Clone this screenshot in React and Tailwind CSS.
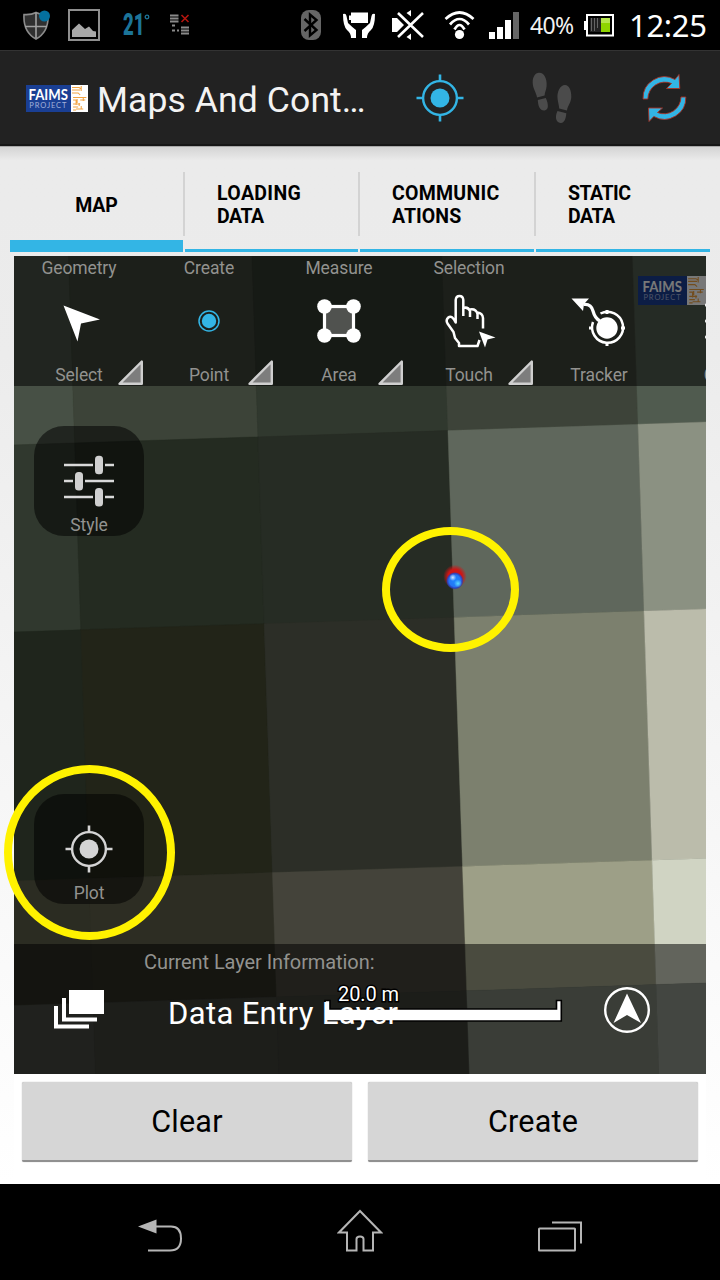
import React from "react";

const tileRows = [
  { top: [250, 250], fills: ["#475045", "#3c4338", "#30382e", "#3d4339", "#505b4f"] },
  { top: [445, 422], fills: ["#30382e", "#242b21", "#262c24", "#5f675c", "#8b9182"] },
  { top: [632, 609], fills: ["#1f251c", "#222418", "#2c2e27", "#7c806e", "#bbbcab"] },
  { top: [881, 858.5], fills: ["#2b2c22", "#2d2d23", "#44433a", "#9d9f87", "#d0d4c3"] },
  { top: [1005.5, 983], fills: ["#444640", "#3e4039", "#3d3e37", "#7b8376", "#8f968b"] },
];
const columnEdges = [
  [-10, -10],
  [68.5, 95.5],
  [252, 279],
  [442, 469.5],
  [632.5, 659],
  [740, 740],
];

function cross(row, col) {
  const [t0, t1] = row;
  const [c0, c1] = col;
  let x = c0;
  let y = t0;
  for (let i = 0; i < 4; i++) {
    y = t0 + ((x - 14) / 692) * (t1 - t0);
    x = c0 + ((y - 256) / 818) * (c1 - c0);
  }
  return `${x.toFixed(1)},${y.toFixed(1)}`;
}

function MapTiles() {
  const bottoms = [...tileRows.slice(1).map((r) => r.top), [1090, 1090]];
  return (
    <svg className="absolute inset-0" width="692" height="818" viewBox="14 256 692 818">
      <rect x="14" y="256" width="692" height="818" fill="#2a2f27" />
      {tileRows.map((row, r) =>
        row.fills.map((fill, c) => (
          <polygon
            key={`${r}-${c}`}
            fill={fill}
            stroke={fill}
            strokeWidth="0.4"
            points={[
              cross(row.top, columnEdges[c]),
              cross(row.top, columnEdges[c + 1]),
              cross(bottoms[r], columnEdges[c + 1]),
              cross(bottoms[r], columnEdges[c]),
            ].join(" ")}
          />
        ))
      )}
    </svg>
  );
}

function Logo({ className }) {
  return (
    <div className={`flex overflow-hidden ${className}`}>
      <div className="flex w-[72%] flex-col items-center justify-center bg-[#1a3f94] text-white">
        <span className="scale-x-[0.85] font-['Lato',sans-serif] text-[15.5px] leading-[15px] font-bold">FAIMS</span>
        <span className="font-['Lato',sans-serif] text-[7.5px] leading-[8px] tracking-[0.9px] text-[#a3b2da]">PROJECT</span>
      </div>
      <svg className="w-[28%] flex-1 bg-white" viewBox="0 0 17 27" preserveAspectRatio="none" fill="none" stroke="#f2a341" strokeWidth="1">
        <path d="M1 2.500H8L10 4M1 5H9M1 8H7L9 10M10 1V6M15 12.500H2M6 14V18M2 15H5V20M9 15H14M2 19H9M8 18V21M12 13V16M2 22H7M5 24H12M2 25H5M10 21V24" />
      </svg>
    </div>
  );
}

function Crosshair({ color, className }) {
  return (
    <svg className={className} width="48" height="48" viewBox="0 0 48 48" fill="none" stroke={color}>
      <circle cx="24" cy="24" r="16.900" strokeWidth="2.400" />
      <path d="M24 .5V7.500M24 40.500V47.500M.5 24H7.500M40.500 24H47.500" strokeWidth="2.600" />
      <circle cx="24" cy="24" r="9.500" fill={color} stroke="none" />
    </svg>
  );
}

function StatusBar() {
  return (
    <header className="flex h-[50px] shrink-0 items-center bg-black pl-[23px]">
      <svg width="28" height="32" viewBox="0 0 28 32" className="shrink-0">
        <path d="M1 5.500Q8 6 13 3.500Q18 6 25 5.500Q26 23 13 30Q0 23 1 5.500Z" fill="#303030" stroke="#8c8c8c" strokeWidth="1.600" />
        <path d="M13 3.500V29M2 17.500H24" stroke="#a0a0a0" strokeWidth="1.600" />
        <circle cx="21.500" cy="7" r="5.500" fill="#04709f" />
      </svg>
      <svg width="32" height="32" viewBox="0 0 32 32" className="ml-[17px] shrink-0">
        <rect x="1" y="1" width="30" height="30" fill="none" stroke="#8f8f8f" strokeWidth="2" />
        <path d="M4 28V21L11 14.500L17 20L21 17.500L25 22L28 22.500V28Z" fill="#a8a8a8" />
      </svg>
      <div className="ml-[22.500px] flex w-[28.500px] shrink-0 items-start text-[#1c7498]">
        <span className="origin-left scale-x-[0.600] font-['Roboto',sans-serif] text-[31px] leading-[36px] font-black">21</span>
        <svg width="6" height="6" viewBox="0 0 6 6" className="mt-[7px] -ml-[14px] shrink-0">
          <circle cx="3" cy="3" r="1.800" fill="none" stroke="#1c7498" strokeWidth="1.300" />
        </svg>
      </div>
      <svg width="20" height="22" viewBox="0 0 20 22" className="ml-[19px] -mt-[2px] shrink-0">
        <path d="M0 2.500H8.500M0 5.500H8.500M0 8.500H8.500M2 12.500H5M2 17.500H5M7 17.500H9M11 14.500H19M11 17.500H19M11 20.500H19" stroke="#8a8a8a" strokeWidth="2" />
        <path d="M11.500 2L18.500 9M18.500 2L11.500 9" stroke="#b3150f" strokeWidth="1.600" />
      </svg>
      <svg width="20" height="30" viewBox="0 0 20 30" className="ml-[111px] shrink-0">
        <rect width="20" height="30" rx="8" fill="#666" />
        <path d="M3.500 9L15.500 20L9 25.500V4.500L15.500 10L3.500 21" fill="none" stroke="#000" strokeWidth="2.400" />
      </svg>
      <svg width="33" height="28" viewBox="0 0 33 28" className="ml-[22px] shrink-0" fill="#fff">
        <path d="M6 4.500H8V1.500H25V12H8V9H6ZM0 3Q3 2 3.500 5L5 12Q9 16 13 19V27H8Q8 22 4 19Q0 15 0 3ZM32 3Q29 2 28.500 5L27 12Q23 16 19 19V27H24Q24 22 28 19Q32 15 32 3Z" />
      </svg>
      <svg width="32" height="30" viewBox="0 0 32 30" className="ml-[16px] shrink-0" fill="none" stroke="#fff">
        <path d="M0 8H5L12 15L5 22H0ZM14.500 3L19 0V6.500ZM14.500 27L19 23.500V30Z" fill="#fff" stroke="none" />
        <path d="M6 3L31 27M31 3L6 27" stroke="#000" strokeWidth="5" />
        <path d="M6 3L31 27M31 3L6 27" strokeWidth="2.600" />
      </svg>
      <svg width="32" height="29" viewBox="0 0 32 29" className="ml-[20px] shrink-0" fill="none" stroke="#fff" strokeWidth="2.700">
        <path d="M1.500 8Q15.500 -5 29.500 8M6 13.500Q15.500 2.500 25 13.500M10.500 18.500Q15.500 9.500 20.500 18.500" />
        <circle cx="15.500" cy="23.500" r="4.600" fill="#fff" stroke="none" />
      </svg>
      <svg width="30" height="27" viewBox="0 0 30 27" className="ml-[13px] shrink-0" fill="#fff">
        <path d="M0 20H6V27H0ZM8 15H14V27H8ZM16 8H22V27H16Z" />
        <path d="M24 0H30V27H24Z" fill="#666" />
      </svg>
      <span className="ml-[11px] w-[46px] shrink-0 font-['Noto_Sans',sans-serif] text-[23px] leading-[50px] tracking-[-0.600px] text-[#f2f2f2]">40%</span>
      <svg width="30" height="23" viewBox="0 0 30 23" className="ml-[8px] shrink-0">
        <path d="M0 7H2V16H0Z" fill="#fff" />
        <rect x="3" y="1" width="26" height="20.500" fill="#000" stroke="#fff" strokeWidth="2" />
        <path d="M6 4H17V18H6Z" fill="#222" />
        <path d="M7.500 4V17M10.500 4V17M13.500 4V14" stroke="#666" />
        <path d="M17 4H26V18H17Z" fill="#8fd400" />
        <path d="M17 4H26V9H17Z" fill="#b5e54b" />
      </svg>
      <span className="ml-[15px] font-['Noto_Sans',sans-serif] text-[31px] leading-[50px] tracking-[-0.300px] text-white">12:25</span>
    </header>
  );
}

function ActionBar() {
  return (
    <div className="flex h-24 shrink-0 items-center border-t border-b-2 border-t-[#333] border-b-[#161616] bg-[#222] pl-[26px]">
      <Logo className="mt-[2px] h-[27px] w-[62px] shrink-0" />
      <h1 className="mt-[5px] ml-[9px] w-[300px] text-[35.500px] leading-[44px] tracking-[0.100px] whitespace-nowrap text-[#f3f3f3]">Maps And Cont…</h1>
      <Crosshair color="#33b5e5" className="ml-[18.500px] shrink-0" />
      <svg width="42" height="52" viewBox="0 0 42 52" className="ml-[68.500px] shrink-0" fill="#4b4b4b">
        <path d="M7 .8C12 .5 15.300 7 14.600 14C14.300 18 12.800 20 12.600 23.500L5 25.500C4.500 21 1 17 .7 11C.5 5 3 1 7 .8ZM5.800 28L13.800 26C17 33 16.500 38 12.500 38.500C8 38.800 6 34 5.800 28Z" />
        <path d="M33 13C28 13 25 20 25.500 26C26 31 27 33 27.200 36.500L35 38.500C35.500 34 39 31 39.300 25C39.500 18 37 13 33 13ZM25.500 39L34.300 41.300C34 47 32 51.500 28.500 51C24 50.500 22.500 45 25.500 39Z" />
      </svg>
      <svg width="46" height="50" viewBox="0 0 46 50" className="ml-[68px] shrink-0">
        <g stroke="#a83226" strokeWidth="0.900" fill="#33b5e5" strokeLinejoin="round">
          <path d="M1 26A21.500 21.500 0 0 1 33 6.500L37 1.500L37.800 15.500H24.500L29.500 10.500A17 17 0 0 0 5.800 26Z" />
          <path d="M43.800 24A21.500 21.500 0 0 1 11.800 43.500L7 48.500L6.500 35H20.500L15.500 39.500A17 17 0 0 0 39 24Z" />
        </g>
      </svg>
    </div>
  );
}

const tabs = [
  { lines: [["MAP", "tracking-[-0.100px]"]], active: true },
  { lines: [["LOADING", "tracking-[0.350px]"], ["DATA", "tracking-[-0.500px]"]] },
  { lines: [["COMMUNIC", "tracking-[0.250px]"], ["ATIONS", "tracking-[0.050px]"]] },
  { lines: [["STATIC", "tracking-[-0.500px]"], ["DATA", "tracking-[-0.500px]"]] },
];

function Tabs() {
  return (
    <nav className="mx-[10px] grid h-[92px] shrink-0 grid-cols-[173px_2px_173px_2px_174px_2px_174px]">
      {tabs.map((tab, i) => (
        <React.Fragment key={i}>
          {i > 0 && <div className="mt-3 h-16 bg-[#d3d3d3]" />}
          <div
            className={
              tab.active
                ? "flex flex-col items-center border-b-[12px] border-[#33b5e5] pt-[34px]"
                : "flex flex-col items-start border-b-[3px] border-[#33b5e5] pt-[22px] pl-8"
            }
          >
            {tab.lines.map(([line, tracking]) => (
              <span key={line} className={`text-[19.500px] leading-[23px] font-bold text-black ${tracking}`}>
                {line}
              </span>
            ))}
          </div>
        </React.Fragment>
      ))}
    </nav>
  );
}

const SelectIcon = () => (
  <svg width="60" height="60" viewBox="0 0 60 60">
    <path d="M14.500 14.500L51 28.500L32 32.500L28.500 50.500Z" fill="#fff" />
  </svg>
);
const PointIcon = () => (
  <svg width="60" height="60" viewBox="0 0 60 60">
    <circle cx="30" cy="30" r="10" fill="none" stroke="#33b5e5" strokeWidth="1.500" />
    <circle cx="30" cy="30" r="7.200" fill="#33b5e5" />
  </svg>
);
const AreaIcon = () => (
  <svg width="60" height="60" viewBox="0 0 60 60">
    <rect x="15.500" y="15.500" width="29" height="29" fill="#50524f" stroke="#fff" strokeWidth="3.200" />
    <g fill="#fff">
      <circle cx="15.500" cy="15.500" r="7.300" />
      <circle cx="44.500" cy="15.500" r="7.300" />
      <circle cx="15.500" cy="44.500" r="7.300" />
      <circle cx="44.500" cy="44.500" r="7.300" />
    </g>
  </svg>
);
const TouchIcon = () => (
  <svg width="60" height="60" viewBox="0 0 60 60">
    <path
      d="M44 37.500V27Q43.500 22 38.500 21.500V28M38.500 23Q37 17.500 31 18.500V26M31 20Q29 15.500 24.300 17V25M24.300 23V9Q24 5 20.500 5Q17 5 16.700 9V31.500Q13 23.500 9.300 26.500Q6.500 29 8.500 32.500L14.500 41L16 47L20 52V55H38.500L40.500 49"
      fill="none" stroke="#fff" strokeWidth="2.500" strokeLinejoin="round"
    />
    <path d="M40 40.500L56.500 46.500L48.500 48.500L46 56.500Z" fill="#fff" />
  </svg>
);
const TrackerIcon = () => (
  <svg width="60" height="60" viewBox="0 0 60 60" fill="none" stroke="#fff">
    <path d="M2.500 7.500H20L15 13L14 20Z" fill="#fff" stroke="none" />
    <path d="M14.500 13.500Q22 12.500 24 20T31 30" strokeWidth="3.200" />
    <path d="M31.500 22.500A15.500 15.500 0 1 1 24 31" strokeWidth="2.500" />
    <path d="M38 19V23M38 51V55M20 37H24M52 37H56" strokeWidth="3" />
    <circle cx="38" cy="37" r="10.700" fill="#fff" stroke="none" />
  </svg>
);
const MoreIcon = () => (
  <svg width="48" height="60" viewBox="0 0 48 60" fill="#fff">
    <circle cx="2" cy="14" r="2" />
    <circle cx="2" cy="30" r="2" />
    <circle cx="2" cy="46" r="2" />
  </svg>
);

const tools = [
  { group: "Geometry", label: "Select", Icon: SelectIcon, menu: true },
  { group: "Create", label: "Point", Icon: PointIcon, menu: true },
  { group: "Measure", label: "Area", Icon: AreaIcon, menu: true },
  { group: "Selection", label: "Touch", Icon: TouchIcon, menu: true },
  { group: "\u00a0", label: "Tracker", Icon: TrackerIcon },
  { group: "\u00a0", label: "Config", Icon: MoreIcon },
];

function Toolbar() {
  return (
    <div className="absolute inset-x-0 top-0 flex h-[130px] overflow-hidden bg-[#000000]/53 text-[17.500px] leading-[20px] tracking-[-0.100px] text-[#92928f]">
      {tools.map(({ group, label, Icon, menu }) => (
        <div key={label} className="relative flex w-[130px] shrink-0 flex-col items-center pt-[2px]">
          <span>{group}</span>
          <div className="mt-[13px]"><Icon /></div>
          <span className="mt-[14px]">{label}</span>
          {menu && (
            <svg className="absolute top-[103px] left-[103px]" width="28" height="27" viewBox="0 0 28 27">
              <path d="M24.800 2.500V24.800H2.500Z" fill="#7d7d7d" stroke="#cfcfcf" strokeWidth="2.400" strokeLinejoin="round" />
            </svg>
          )}
        </div>
      ))}
    </div>
  );
}

function MapButton({ label, className, children }) {
  return (
    <div className={`absolute left-5 flex h-[110px] w-[110px] flex-col items-center rounded-[30px] bg-[#000000]/53 ${className}`}>
      <div className="mt-[31px] h-[48px]">{children}</div>
      <span className="mt-[10px] text-[17.500px] leading-[20px] tracking-[-0.100px] text-[#92928f]">{label}</span>
    </div>
  );
}

function MapView() {
  return (
    <section className="relative mx-[14px] mt-1 h-[818px] shrink-0 overflow-hidden">
      <MapTiles />
      <svg className="absolute top-[307px] left-[427px]" width="28" height="32" viewBox="0 0 28 32">
        <defs>
          <radialGradient id="halo">
            <stop offset="0.600" stopColor="#cf1515" />
            <stop offset="1" stopColor="#cf1515" stopOpacity="0" />
          </radialGradient>
          <radialGradient id="ball">
            <stop offset="0" stopColor="#1f86ff" />
            <stop offset="0.650" stopColor="#2376f5" />
            <stop offset="0.850" stopColor="#2b3fc0" stopOpacity="0.900" />
            <stop offset="1" stopColor="#2b3fa0" stopOpacity="0" />
          </radialGradient>
          <radialGradient id="shine">
            <stop offset="0" stopColor="#fff" stopOpacity="0.800" />
            <stop offset="1" stopColor="#fff" stopOpacity="0" />
          </radialGradient>
          <radialGradient id="glow">
            <stop offset="0" stopColor="#5fdcff" />
            <stop offset="1" stopColor="#5fdcff" stopOpacity="0" />
          </radialGradient>
        </defs>
        <circle cx="14" cy="13.500" r="11.800" fill="url(#halo)" />
        <circle cx="13.800" cy="17.800" r="8.800" fill="url(#ball)" />
        <circle cx="17" cy="20.500" r="4" fill="url(#glow)" />
        <circle cx="11.800" cy="14.500" r="3.500" fill="url(#shine)" />
      </svg>
      <Logo className="absolute top-[20px] left-[624px] h-[29px] w-[68px]" />
      <Toolbar />
      <MapButton label="Style" className="top-[170px]">
        <svg width="50" height="52" viewBox="0 -2 50 52" className="-mt-[2px]" fill="none" stroke="#d9d9d9">
          <path d="M0 8H29M41 8H50M0 24H9M21 24H50M0 40H29M41 40H50" strokeWidth="2.600" />
          <g fill="#d0d0d0" stroke="none">
            <rect x="31" y="-1.200" width="8" height="18.500" rx="3.500" />
            <rect x="11" y="15" width="8" height="18.500" rx="3.500" />
            <rect x="31" y="31" width="8" height="18.500" rx="3.500" />
          </g>
        </svg>
      </MapButton>
      <MapButton label="Plot" className="top-[538px]">
        <Crosshair color="#d4d4d4" />
      </MapButton>
      <div className="absolute inset-x-0 bottom-0 h-[130px] bg-[#000000]/53">
        <svg className="absolute top-[55px] left-[309px]" width="242" height="25" viewBox="0 0 242 25">
          <path d="M2 1.500H7V10H233.500V1.500H238.300V22H2Z" fill="#fff" stroke="#000" strokeWidth="1.600" />
        </svg>
        <span className="absolute top-[38px] left-[324px] text-[20px] leading-[24px] tracking-[-0.100px] text-white [-webkit-text-stroke:3px_black] [paint-order:stroke_fill]">
          20.0 m
        </span>
        <div className="relative flex h-full items-start">
          <svg className="mt-[45px] ml-[40px] shrink-0" width="51" height="40" viewBox="0 0 51 40" fill="#fff">
            <path d="M15 1H50V25H15ZM8 9H12V28.500H43V32.500H8ZM0 17H4V35.500H35V39.500H0Z" />
          </svg>
          <div className="ml-[39px] flex w-[400px] flex-col">
            <span className="mt-[6px] text-[20px] leading-[24px] tracking-[-0.080px] text-[#92928f]">Current Layer Information:</span>
            <span className="mt-[22px] ml-[24px] text-[31px] leading-[36px] tracking-[0.350px] text-white">Data Entry Layer</span>
          </div>
          <svg className="mt-[42px] ml-[59px] shrink-0" width="48" height="48" viewBox="0 0 48 48">
            <circle cx="24" cy="24" r="21.800" fill="none" stroke="#fff" strokeWidth="2.400" />
            <path d="M24 7.500L38 37L24 29L10.500 37Z" fill="#fff" />
          </svg>
        </div>
      </div>
    </section>
  );
}

function NavBar() {
  return (
    <footer className="flex h-24 shrink-0 items-center bg-black pl-[138px]">
      <svg width="46" height="50" viewBox="0 0 46 50" fill="none" stroke="#b5b5b5" strokeWidth="2">
        <path d="M0 19.500L18.500 12.500V26.500Z" fill="#b5b5b5" stroke="none" />
        <path d="M17 19.500H33Q43 19.500 43 31.500Q43 43.500 32 43.500H10" />
      </svg>
      <svg className="ml-[153px]" width="46" height="50" viewBox="0 0 46 50" fill="none" stroke="#b5b5b5" strokeWidth="2">
        <path d="M23 4L44 25.500H36V43.500H26.500V32Q26.500 29.500 23 29.500Q19.500 29.500 19.500 32V43.500H10V25.500H2Z" />
      </svg>
      <svg className="ml-[154px]" width="48" height="50" viewBox="0 0 48 50" fill="none" stroke="#b5b5b5" strokeWidth="2">
        <rect x="2" y="21.500" width="36" height="22" rx="0.500" />
        <path d="M15 15.500H44V36.500" />
      </svg>
    </footer>
  );
}

export default function App() {
  return (
    <div className="relative flex h-[1280px] w-[720px] flex-col overflow-hidden bg-black font-['Roboto',sans-serif]">
      <StatusBar />
      <ActionBar />
      <main className="flex flex-1 flex-col bg-linear-to-b from-[#ebebeb] from-5% via-[#ececec] via-20% to-white">
        <div className="h-[14px] shrink-0 border-t border-[#a8a8a8] bg-linear-to-b from-[#d4d4d4] to-[#eaeaea]" />
        <Tabs />
        <MapView />
        <div className="mx-[14px] flex h-[110px] gap-4 bg-white px-2 pt-2">
          {["Clear", "Create"].map((label) => (
            <button
              key={label}
              className="h-20 flex-1 rounded-[2px] border-b-2 border-[#909090] bg-[#d6d6d6] pt-[2px] text-[30.500px] tracking-[0.200px] text-black shadow-[0_0_1px_#999]"
            >
              {label}
            </button>
          ))}
        </div>
      </main>
      <NavBar />
      <div className="absolute top-[527px] left-[382px] h-[125px] w-[137px] rounded-[50%] border-8 border-[#fff200]" />
      <div className="absolute top-[765px] left-[4px] h-[175px] w-[171px] rounded-[50%] border-8 border-[#fff200]" />
    </div>
  );
}
